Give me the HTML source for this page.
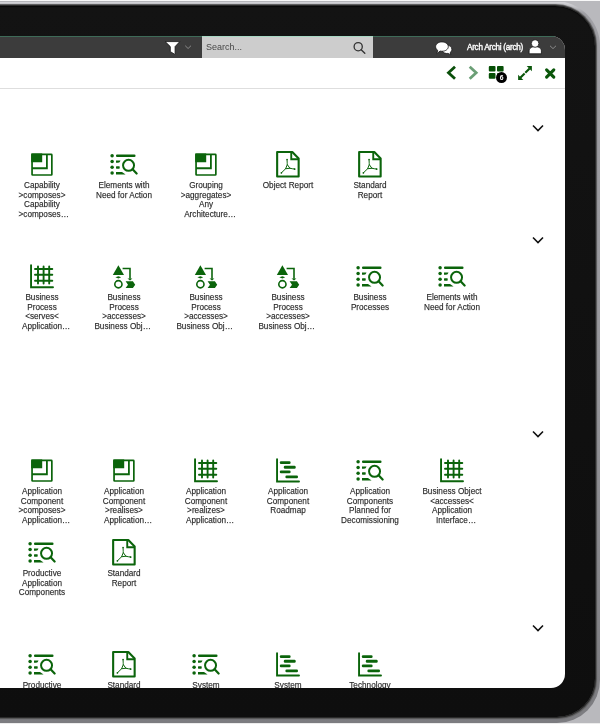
<!DOCTYPE html>
<html><head><meta charset="utf-8">
<style>
html,body{margin:0;padding:0;width:600px;height:724px;overflow:hidden;background:#b9b9bd;font-family:"Liberation Sans",sans-serif;}
#topline{position:absolute;left:0;top:0;width:600px;height:1px;background:#f8f8f8;}
#botline{position:absolute;left:0;top:723px;width:600px;height:1px;background:#ececec;}
#rim{position:absolute;left:-300px;top:1px;width:900px;height:722px;border-radius:0 45px 43px 0;background:linear-gradient(#b4b4b8 0px,#b8b8bc 1px,#d2d2d6 1.5px,#cfcfd3 3px,#a0a0a5 12px,#98989d 50%,#7c7c80 100%);}
#body{position:absolute;left:-296px;top:6px;width:891px;height:711px;border-radius:0 40px 38px 0;background:linear-gradient(#131313,#0e0e0e);box-shadow:0 0 0.5px 1px #2a2a2a, 0 0 1px 1.5px #555, inset 0 1px 1px #080808;}
#screen{position:absolute;left:-20px;top:36px;width:585px;height:652px;border-radius:0 14px 14px 0;background:#fff;overflow:hidden;}
#hdr{position:absolute;left:0;top:0;width:585px;height:22px;background:#3c3c3c;border-top:1px solid #3e6b58;box-sizing:border-box;}
#search{position:absolute;left:222px;top:0;width:171px;height:22px;background:#cdcdcd;border-top:1px solid #a8d8c4;box-sizing:border-box;}
#search span{position:absolute;left:4px;top:5px;font-size:9px;color:#484848;will-change:transform;}
.uname{position:absolute;left:487px;top:7px;font-size:8.2px;font-weight:normal;letter-spacing:-0.3px;color:#fff;white-space:nowrap;will-change:transform;-webkit-text-stroke:0.35px #fff;}
#tb{position:absolute;left:0;top:22px;width:585px;height:30px;border-bottom:1px solid #dedede;}
.abs{position:absolute;}
.it{position:absolute;will-change:transform;width:82px;text-align:center;font-size:8.2px;line-height:9.6px;color:#2a2a2a;white-space:nowrap;-webkit-text-stroke:0.25px rgba(40,40,40,0.6);}
.ic{position:absolute;width:28px;height:28px;overflow:visible;}
.chev{position:absolute;}
.tr{position:relative;display:inline-block;}
.gh{visibility:hidden;}
.vs{position:absolute;left:0;top:0;}
#content{position:absolute;left:0;top:0;width:600px;height:724px;}
</style></head><body>

<svg width="0" height="0" style="position:absolute">
<defs>
<symbol id="cap" viewBox="0 0 28 28">
  <g transform="translate(3.2 3.1)">
  <rect x="0.85" y="0.85" width="19.8" height="20.7" fill="none" stroke="#0b640b" stroke-width="1.7" rx="0.6"/>
  <rect x="0" y="0" width="11" height="8.8" fill="#0b640b"/>
  <path d="M15.7 0.8 V14.8 H0.8" fill="none" stroke="#0b640b" stroke-width="1.8"/>
  </g>
</symbol>
<symbol id="elm" viewBox="0 0 28 28">
  <g fill="#0b640b">
  <circle cx="2.1" cy="5.35" r="1.75"/><circle cx="2.1" cy="11.05" r="1.75"/><circle cx="2.1" cy="16.95" r="1.75"/><circle cx="2.1" cy="22.55" r="1.75"/>
  <rect x="6" y="4.15" width="19.5" height="2.6" rx="1.1"/>
  <path d="M6 10.1 H10.5 Q10 12.3 8 12.4 H6 Z"/>
  <rect x="6" y="15.9" width="3.7" height="2.4" rx="0.6"/>
  <path d="M6 21.7 H12 L15.6 24.2 H6 Z"/>
  </g>
  <circle cx="18.55" cy="15" r="5.5" fill="none" stroke="#0b640b" stroke-width="2"/>
  <path d="M22.6 19 L26.6 23.2" stroke="#0b640b" stroke-width="2.2" stroke-linecap="round"/>
</symbol>
<symbol id="pdf" viewBox="0 0 28 28">
  <path d="M3.15 1.6 H18.3 L24.65 8.1 V26.1 H3.15 Z" fill="none" stroke="#0b640b" stroke-width="2.1" stroke-linejoin="round"/>
  <path d="M17.25 1.6 V8.9 H24.65" fill="none" stroke="#0b640b" stroke-width="1.9"/>
  <path d="M13.07 8.9 C13.1 11 13.2 12.8 13.3 14.3 L15.9 17.9 C17.3 18.3 19 18.5 20.8 18.7 M13.3 14.3 L11.6 18.4 L7.2 22.7 M11.6 18.4 L15.9 17.9" fill="none" stroke="#0b640b" stroke-width="1.0" stroke-linecap="round" stroke-linejoin="round"/><circle cx="13.07" cy="9.4" r="0.8" fill="#0b640b"/><circle cx="20.6" cy="18.7" r="0.9" fill="#0b640b"/><circle cx="7.4" cy="22.5" r="0.85" fill="#0b640b"/>
</symbol>
<symbol id="grid" viewBox="0 0 28 28">
  <g fill="none" stroke="#0b640b" stroke-width="1.9" stroke-linecap="round">
  <path d="M3.05 2.9 V24.85 H25"/>
  <path d="M10 4.05 V21.15 M15.6 4.05 V21.15 M21.2 4.05 V21.15 M7 6.65 H24.3 M7 12.45 H24.3 M7 18.35 H24.3"/>
  </g>
</symbol>
<symbol id="proc" viewBox="0 0 28 28">
  <g fill="#0b640b">
  <path d="M8.4 2.8 L14 12.6 H2.8 Z"/>
  <path d="M5.4 15 L8.4 13.8 L11.2 15 L8.4 16.2 Z"/>
  <path d="M15.6 18.9 H22.9 L25.2 22.3 L22.9 25.7 H15.6 L18 22.3 Z"/>
  <path d="M17.5 16.1 H22.4 L20 18.2 Z"/>
  </g>
  <circle cx="8.4" cy="21.9" r="3.6" fill="none" stroke="#0b640b" stroke-width="1.6"/>
  <path d="M12.6 6.1 H20 V16.5" fill="none" stroke="#0b640b" stroke-width="1.6"/>
</symbol>
<symbol id="gantt" viewBox="0 0 28 28">
  <path d="M3.05 2.9 V25.1 H25" fill="none" stroke="#0b640b" stroke-width="1.9" stroke-linecap="round"/>
  <g fill="#0b640b">
  <rect x="5.8" y="4.9" width="10.8" height="2.8" rx="1.2"/>
  <rect x="9.8" y="9.4" width="11.9" height="2.9" rx="1.2"/>
  <rect x="5.8" y="14.1" width="10.8" height="2.8" rx="1.2"/>
  <rect x="11.4" y="19.1" width="12.6" height="2.8" rx="1.2"/>
  </g>
</symbol>
</defs></svg>

<div id="topline"></div><div id="botline"></div>
<div id="rim"></div>
<div id="body"></div>
<div id="screen">
  <div id="hdr"></div>
  <div id="search"><span>Search...</span></div>
  <div class="uname">Arch Archi (arch)</div>
  <div id="tb"></div>
</div>
<svg class="abs" style="left:0;top:0" width="600" height="90" viewBox="0 0 600 90">
  <!-- funnel -->
  <path d="M165.2 41.6 H179.8 L175.1 46.6 V53.6 Q175 54.4 174.2 54 L170.8 51.9 Q170.3 51.6 170.3 51 V46.6 Z" fill="#fff" stroke="#111" stroke-width="0.8" stroke-linejoin="round"/>
  <path d="M185.2 45.7 L188.1 48.5 L191 45.7" fill="none" stroke="#8a8a8a" stroke-width="1"/>
  <!-- search magnifier -->
  <circle cx="358.2" cy="46.7" r="4.1" fill="none" stroke="#333" stroke-width="1.3"/>
  <path d="M361.2 49.7 L364.8 53.2" stroke="#333" stroke-width="1.4" stroke-linecap="round"/>
  <!-- chat -->
  <g stroke="#1e1e1e" stroke-width="0.9" fill="#fff" stroke-linejoin="round">
   <path d="M446.8 45.1 C449.7 45.1 451.9 47 451.9 49.3 C451.9 50.6 451.3 51.7 450.3 52.4 L450.8 54.7 L447.9 53.4 C447.5 53.5 447.2 53.5 446.8 53.5 C443.9 53.5 441.7 51.6 441.7 49.3 C441.7 47 443.9 45.1 446.8 45.1 Z"/>
   <path d="M441.9 41.9 C445.5 41.9 448.3 44 448.3 46.6 C448.3 49.2 445.5 51.3 441.9 51.3 C441.3 51.3 440.7 51.2 440.1 51.1 L436.7 53.7 L437.7 50.4 C436.4 49.5 435.6 48.1 435.6 46.6 C435.6 44 438.4 41.9 441.9 41.9 Z"/>
  </g>
  <!-- user -->
  <g fill="#fff" stroke="#111" stroke-width="0.8">
   <path d="M529.1 53.8 V51 C529.1 48.4 531.5 46.6 535.2 46.6 C538.9 46.6 541.4 48.4 541.4 51 V53.8 Z" stroke-linejoin="round"/>
   <circle cx="535.1" cy="43.5" r="3.8"/>
  </g>
  <path d="M550 45.8 L553 48.6 L556 45.8" fill="none" stroke="#8a8a8a" stroke-width="1"/>
  <!-- toolbar -->
  <path d="M455 66.7 L448.5 72.7 L455 78.7" fill="none" stroke="#0a4f0a" stroke-width="2.8"/>
  <path d="M469.7 66.7 L476.2 72.7 L469.7 78.7" fill="none" stroke="#6b9f76" stroke-width="2.8"/>
  <g fill="#064f06">
   <rect x="488.8" y="66.1" width="6.7" height="5.5" rx="1"/>
   <rect x="497" y="66.1" width="6.6" height="5.5" rx="1"/>
   <rect x="488.8" y="73.1" width="6.7" height="5.6" rx="1"/>
   <rect x="497" y="73.1" width="6.6" height="5.6" rx="1"/>
  </g>
  <circle cx="501.5" cy="77.6" r="5.5" fill="#000"/>
  <text x="501.6" y="80.1" font-family="Liberation Sans" font-weight="bold" font-size="6.8" fill="#fff" text-anchor="middle">6</text>
  <g fill="#0a560a">
   <path d="M529.6 68.4 L525.3 72.7 M524.6 73.4 L520.3 77.7" stroke="#0a560a" stroke-width="2.1"/>
   <path d="M526.7 66.1 H531.9 V71.3 Z"/>
   <path d="M518.1 74.7 V79.9 H523.3 Z"/>
  </g>
  <path d="M546.6 69.8 L553.8 77.2 M553.8 69.8 L546.6 77.2" stroke="#0a560a" stroke-width="3.1" stroke-linecap="round"/>
</svg>
<div id="content" style="clip-path:inset(58px 35px 36px 0 round 0 14px 14px 0)">
<svg class="chev" style="left:530px;top:123.5px" width="16" height="10" viewBox="0 0 16 10"><path d="M3 1.5 L8 6.5 L13 1.5" fill="none" stroke="#111" stroke-width="1.6"/></svg><svg class="chev" style="left:530px;top:235.5px" width="16" height="10" viewBox="0 0 16 10"><path d="M3 1.5 L8 6.5 L13 1.5" fill="none" stroke="#111" stroke-width="1.6"/></svg><svg class="chev" style="left:530px;top:429.5px" width="16" height="10" viewBox="0 0 16 10"><path d="M3 1.5 L8 6.5 L13 1.5" fill="none" stroke="#111" stroke-width="1.6"/></svg><svg class="chev" style="left:530px;top:623.5px" width="16" height="10" viewBox="0 0 16 10"><path d="M3 1.5 L8 6.5 L13 1.5" fill="none" stroke="#111" stroke-width="1.6"/></svg>
<svg class="abs" style="left:0;top:0" width="600" height="724" viewBox="0 0 600 724"><use href="#cap" x="28.00" y="150.35" width="28" height="28"/><use href="#elm" x="110.00" y="150.35" width="28" height="28"/><use href="#cap" x="192.00" y="150.35" width="28" height="28"/><use href="#pdf" x="274.00" y="150.35" width="28" height="28"/><use href="#pdf" x="356.00" y="150.35" width="28" height="28"/><use href="#grid" x="28.00" y="262.35" width="28" height="28"/><use href="#proc" x="110.00" y="262.35" width="28" height="28"/><use href="#proc" x="192.00" y="262.35" width="28" height="28"/><use href="#proc" x="274.00" y="262.35" width="28" height="28"/><use href="#elm" x="356.00" y="262.35" width="28" height="28"/><use href="#elm" x="438.00" y="262.35" width="28" height="28"/><use href="#cap" x="28.00" y="456.35" width="28" height="28"/><use href="#cap" x="110.00" y="456.35" width="28" height="28"/><use href="#grid" x="192.00" y="456.35" width="28" height="28"/><use href="#gantt" x="274.00" y="456.35" width="28" height="28"/><use href="#elm" x="356.00" y="456.35" width="28" height="28"/><use href="#grid" x="438.00" y="456.35" width="28" height="28"/><use href="#elm" x="28.00" y="538.35" width="28" height="28"/><use href="#pdf" x="110.00" y="538.35" width="28" height="28"/><use href="#elm" x="28.00" y="650.35" width="28" height="28"/><use href="#pdf" x="110.00" y="650.35" width="28" height="28"/><use href="#elm" x="192.00" y="650.35" width="28" height="28"/><use href="#gantt" x="274.00" y="650.35" width="28" height="28"/><use href="#gantt" x="356.00" y="650.35" width="28" height="28"/></svg>
<div class="it" style="left:1.00px;top:181.01px">Capability<br>&gt;composes&gt;<br>Capability<br><span class="tr"><span class="gh">&gt;composes&gt;</span><span class="vs">&gt;composes…</span></span></div><div class="it" style="left:83.00px;top:181.01px">Elements with<br>Need for Action</div><div class="it" style="left:165.00px;top:181.01px">Grouping<br>&gt;aggregates&gt;<br>Any<br><span class="tr"><span class="gh">Architecture</span><span class="vs">Architecture…</span></span></div><div class="it" style="left:247.00px;top:181.01px">Object Report</div><div class="it" style="left:329.00px;top:181.01px">Standard<br>Report</div><div class="it" style="left:1.00px;top:293.01px">Business<br>Process<br>&lt;serves&lt;<br><span class="tr"><span class="gh">Application</span><span class="vs">Application…</span></span></div><div class="it" style="left:83.00px;top:293.01px">Business<br>Process<br>&gt;accesses&gt;<br><span class="tr"><span class="gh">Business Object</span><span class="vs">Business Obj…</span></span></div><div class="it" style="left:165.00px;top:293.01px">Business<br>Process<br>&gt;accesses&gt;<br><span class="tr"><span class="gh">Business Object</span><span class="vs">Business Obj…</span></span></div><div class="it" style="left:247.00px;top:293.01px">Business<br>Process<br>&gt;accesses&gt;<br><span class="tr"><span class="gh">Business Object</span><span class="vs">Business Obj…</span></span></div><div class="it" style="left:329.00px;top:293.01px">Business<br>Processes</div><div class="it" style="left:411.00px;top:293.01px">Elements with<br>Need for Action</div><div class="it" style="left:1.00px;top:487.01px">Application<br>Component<br>&gt;composes&gt;<br><span class="tr"><span class="gh">Application</span><span class="vs">Application…</span></span></div><div class="it" style="left:83.00px;top:487.01px">Application<br>Component<br>&gt;realises&gt;<br><span class="tr"><span class="gh">Application</span><span class="vs">Application…</span></span></div><div class="it" style="left:165.00px;top:487.01px">Application<br>Component<br>&gt;realizes&gt;<br><span class="tr"><span class="gh">Application</span><span class="vs">Application…</span></span></div><div class="it" style="left:247.00px;top:487.01px">Application<br>Component<br>Roadmap</div><div class="it" style="left:329.00px;top:487.01px">Application<br>Components<br>Planned for<br>Decomissioning</div><div class="it" style="left:411.00px;top:487.01px">Business Object<br>&lt;accesses&lt;<br>Application<br><span class="tr"><span class="gh">Interface</span><span class="vs">Interface…</span></span></div><div class="it" style="left:1.00px;top:569.01px">Productive<br>Application<br>Components</div><div class="it" style="left:83.00px;top:569.01px">Standard<br>Report</div><div class="it" style="left:1.00px;top:681.01px">Productive</div><div class="it" style="left:83.00px;top:681.01px">Standard</div><div class="it" style="left:165.00px;top:681.01px">System</div><div class="it" style="left:247.00px;top:681.01px">System</div><div class="it" style="left:329.00px;top:681.01px">Technology</div>
</div>
</body></html>
